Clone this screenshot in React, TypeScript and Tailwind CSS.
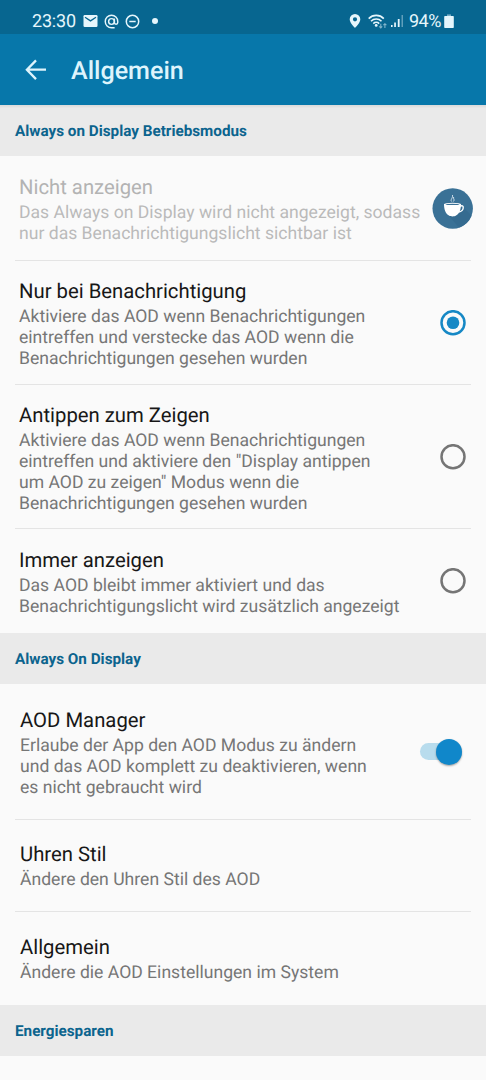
import type { ReactNode } from "react"
import clsx from "clsx"

function StatusBar() {
  return (
    <div className="flex h-[34px] items-center bg-[#076690] pt-2 pr-8 pl-8 text-[#e6f6fc]">
      <span className="mt-0.5 w-[45px] text-[18px] leading-[26px] tracking-[-0.2px] whitespace-nowrap">23:30</span>
      <svg className="ml-1.5" width="15" height="12" viewBox="0 0 15 12">
        <rect x="0.5" y="0" width="14" height="12" rx="1.2" fill="currentColor" />
        <path d="M2 2.2l5.5 3.7L13 2.2" fill="none" stroke="#076690" strokeWidth="1.3" />
      </svg>
      <svg className="ml-1.5" width="15" height="15" viewBox="0 0 24 24" fill="none" stroke="currentColor" strokeWidth="2.3">
        <circle cx="12" cy="12" r="4.6" />
        <path d="M16.6 7v6.7a2.7 2.7 0 0 0 5.4 0V12a10 10 0 1 0-10 10h5" />
      </svg>
      <svg className="ml-1.5" width="15" height="15" viewBox="0 0 15 15" fill="none" stroke="currentColor" strokeWidth="1.5">
        <circle cx="7.5" cy="7.5" r="6.2" />
        <path d="M4.3 7.5h6.4" />
      </svg>
      <span className="ml-3 size-[6px] rounded-full bg-[#e6f6fc]" />

      <div className="ml-auto flex items-center">
        <svg className="mr-px" width="12" height="14" viewBox="0 0 11 14">
          <path
            d="M5.5 0A5.3 5.3 0 0 0 .2 5.3C.2 9 5.5 14 5.5 14s5.3-5 5.3-8.7A5.3 5.3 0 0 0 5.5 0zm0 3.2a2.1 2.1 0 1 1 0 4.2 2.1 2.1 0 0 1 0-4.2z"
            fill="currentColor"
          />
        </svg>
        <svg className="ml-[6px]" width="19" height="15" viewBox="0 0 19 15" fill="none" stroke="currentColor">
          <path d="M.7 4.600a10.500 10.500 0 0 1 15.100 0M3 7.200a7.300 7.300 0 0 1 10.500 0M5.300 9.600a4.200 4.200 0 0 1 5.900 0" strokeWidth="1.600" />
          <circle cx="8.2" cy="11.4" r="1.4" fill="currentColor" stroke="none" />
          <path d="M12.800 9.700v4.300m-1.600-1.600l1.600 1.600 1.400-1.600M16.900 14V9.700m-1.500 1.500l1.500-1.500 1.500 1.500" strokeWidth="1.100" opacity="0.550" />
        </svg>
        <svg className="ml-[3px]" width="14" height="14" viewBox="0 0 14 14" fill="currentColor">
          <rect x="1" y="11" width="1.6" height="2" />
          <rect x="4.2" y="8.5" width="1.7" height="4.5" />
          <rect x="7.8" y="5" width="1.8" height="8" />
          <rect x="11.5" y="1" width="1.5" height="12" opacity="0.4" />
        </svg>
        <span className="mt-0.5 ml-[5px] w-[33px] text-[18px] leading-[26px] tracking-[-0.5px] whitespace-nowrap">94%</span>
        <svg className="ml-0.5" width="10" height="15" viewBox="0 0 10 15">
          <path d="M3 0.4h4v1.9H3z" fill="currentColor" opacity="0.5" />
          <rect x="0.2" y="2" width="9.6" height="12" rx="0.8" fill="currentColor" />
        </svg>
      </div>
    </div>
  )
}

function AppBar() {
  return (
    <header className="flex h-[71px] items-center bg-[#0777aa] pl-[25px] text-[#def4fc]">
      <svg width="22" height="22" viewBox="0 0 22 22" fill="none" stroke="currentColor" strokeWidth="2.3">
        <path d="M21 10.700H2.500M11 1.400L1.900 10.700l9.100 9.400" />
      </svg>
      <h1 className="mt-1 ml-6 text-[25.1px] leading-8 font-medium">Allgemein</h1>
    </header>
  )
}

function SectionHeader({ children, className }: { children: ReactNode; className?: string }) {
  return (
    <h2 className={clsx("flex h-[51px] items-center bg-[#eaeaea] pt-[2px] pl-[15px] text-[15.25px] font-bold text-[#0c648e]", className)}>
      {children}
    </h2>
  )
}

type RowProps = {
  title: string
  lines: string[]
  height: string
  textClass: string
  disabled?: boolean
  control?: ReactNode
}

function Row({ title, lines, height, textClass, disabled, control }: RowProps) {
  return (
    <div className={clsx("flex", height)}>
      <div className={clsx("flex-1 whitespace-nowrap", textClass)}>
        <div className={clsx("text-[20.3px] leading-6", disabled ? "text-[#b3b3b3]" : "text-[#171717]")}>{title}</div>
        <div className={clsx("mt-[4.4px] text-[17.58px] leading-[20.7px]", disabled ? "text-[#bababa]" : "text-[#767676]")}>
          {lines.map((line) => (
            <div key={line}>{line}</div>
          ))}
        </div>
      </div>
      {control}
    </div>
  )
}

function Divider() {
  return <div className="mx-[15px] h-px bg-[#e4e4e4]" />
}

function Radio({ checked = false }: { checked?: boolean }) {
  return (
    <svg
      className={clsx("mr-5 self-center", checked ? "text-[#1688c5]" : "text-[#757575]")}
      width="26"
      height="26"
      viewBox="0 0 26 26"
    >
      <circle cx="13" cy="12.7" r="11.5" fill="none" stroke="currentColor" strokeWidth="2.5" />
      {checked && <circle cx="13" cy="12.7" r="6.3" fill="currentColor" />}
    </svg>
  )
}

function Toggle() {
  return (
    <span className="mr-6 flex h-[17px] w-[42px] items-center justify-end self-center rounded-full bg-[#b8dced]">
      <span className="size-[26px] shrink-0 rounded-full bg-[#1087ca] shadow-[0_1px_2px_rgba(0,0,0,0.35)]" />
    </span>
  )
}

function CoffeeBadge() {
  return (
    <svg className="mr-[13px] self-center" width="41" height="41" viewBox="0 0 41 41">
      <circle cx="20.7" cy="20.5" r="20.2" fill="#3a7196" />
      <path d="M31 19l8.500 8.500A20.200 20.200 0 0 1 27 39.500L17 28z" fill="#356b90" />
      <path d="M12 16c0 5.500 1.500 9.500 5 11.600 1.600 1.200 5.400 1.200 7 0 3.500-2.100 5-6.100 5-11.600z" fill="#fff" />
      <ellipse cx="20.5" cy="16.2" rx="8.5" ry="1.500" fill="#fff" />
      <ellipse cx="20.5" cy="16.4" rx="7" ry="0.7" fill="#3a7196" />
      <path d="M28 18.300c2-1 3.500-.4 3.200 1.700-.2 2-2 3.500-4.500 4" fill="none" stroke="#fff" strokeWidth="1.4" />
      <path d="M19.600 13.500c-1.700-2 1.500-3 .9-6.500M21.400 13.500c1.700-2-.4-2.600.2-4.500" fill="none" stroke="#dce8f0" strokeWidth="0.9" />
    </svg>
  )
}

export default function App() {
  return (
    <main className="h-[1080px] w-[486px] overflow-hidden bg-[#fafafa] font-[Roboto,sans-serif] [text-rendering:geometricPrecision]">
      <StatusBar />
      <AppBar />

      <SectionHeader className="shadow-[inset_0_3px_2px_-1px_#dcdcdc]">Always on Display Betriebsmodus</SectionHeader>
      <Row
        height="h-[104px]"
        textClass="pt-[19px] pl-[19px]"
        title="Nicht anzeigen"
        lines={["Das Always on Display wird nicht angezeigt, sodass", "nur das Benachrichtigungslicht sichtbar ist"]}
        disabled
        control={<CoffeeBadge />}
      />
      <Divider />
      <Row
        height="h-[123px]"
        textClass="pt-[18px] pl-[19px]"
        title="Nur bei Benachrichtigung"
        lines={["Aktiviere das AOD wenn Benachrichtigungen", "eintreffen und verstecke das AOD wenn die", "Benachrichtigungen gesehen wurden"]}
        control={<Radio checked />}
      />
      <Divider />
      <Row
        height="h-[143px]"
        textClass="pt-[18px] pl-[19px]"
        title="Antippen zum Zeigen"
        lines={[
          "Aktiviere das AOD wenn Benachrichtigungen",
          "eintreffen und aktiviere den \"Display antippen",
          "um AOD zu zeigen\" Modus wenn die",
          "Benachrichtigungen gesehen wurden",
        ]}
        control={<Radio />}
      />
      <Divider />
      <Row
        height="h-[104px]"
        textClass="pt-[19px] pl-[19px]"
        title="Immer anzeigen"
        lines={["Das AOD bleibt immer aktiviert und das", "Benachrichtigungslicht wird zusätzlich angezeigt"]}
        control={<Radio />}
      />

      <SectionHeader>Always On Display</SectionHeader>
      <Row
        height="h-[135px]"
        textClass="pt-6 pl-5"
        title="AOD Manager"
        lines={["Erlaube der App den AOD Modus zu ändern", "und das AOD komplett zu deaktivieren, wenn", "es nicht gebraucht wird"]}
        control={<Toggle />}
      />
      <Divider />
      <Row height="h-[91px]" textClass="pt-[22px] pl-5" title="Uhren Stil" lines={["Ändere den Uhren Stil des AOD"]} />
      <Divider />
      <Row height="h-[93px]" textClass="pt-[23px] pl-5" title="Allgemein" lines={["Ändere die AOD Einstellungen im System"]} />

      <SectionHeader>Energiesparen</SectionHeader>
    </main>
  )
}
